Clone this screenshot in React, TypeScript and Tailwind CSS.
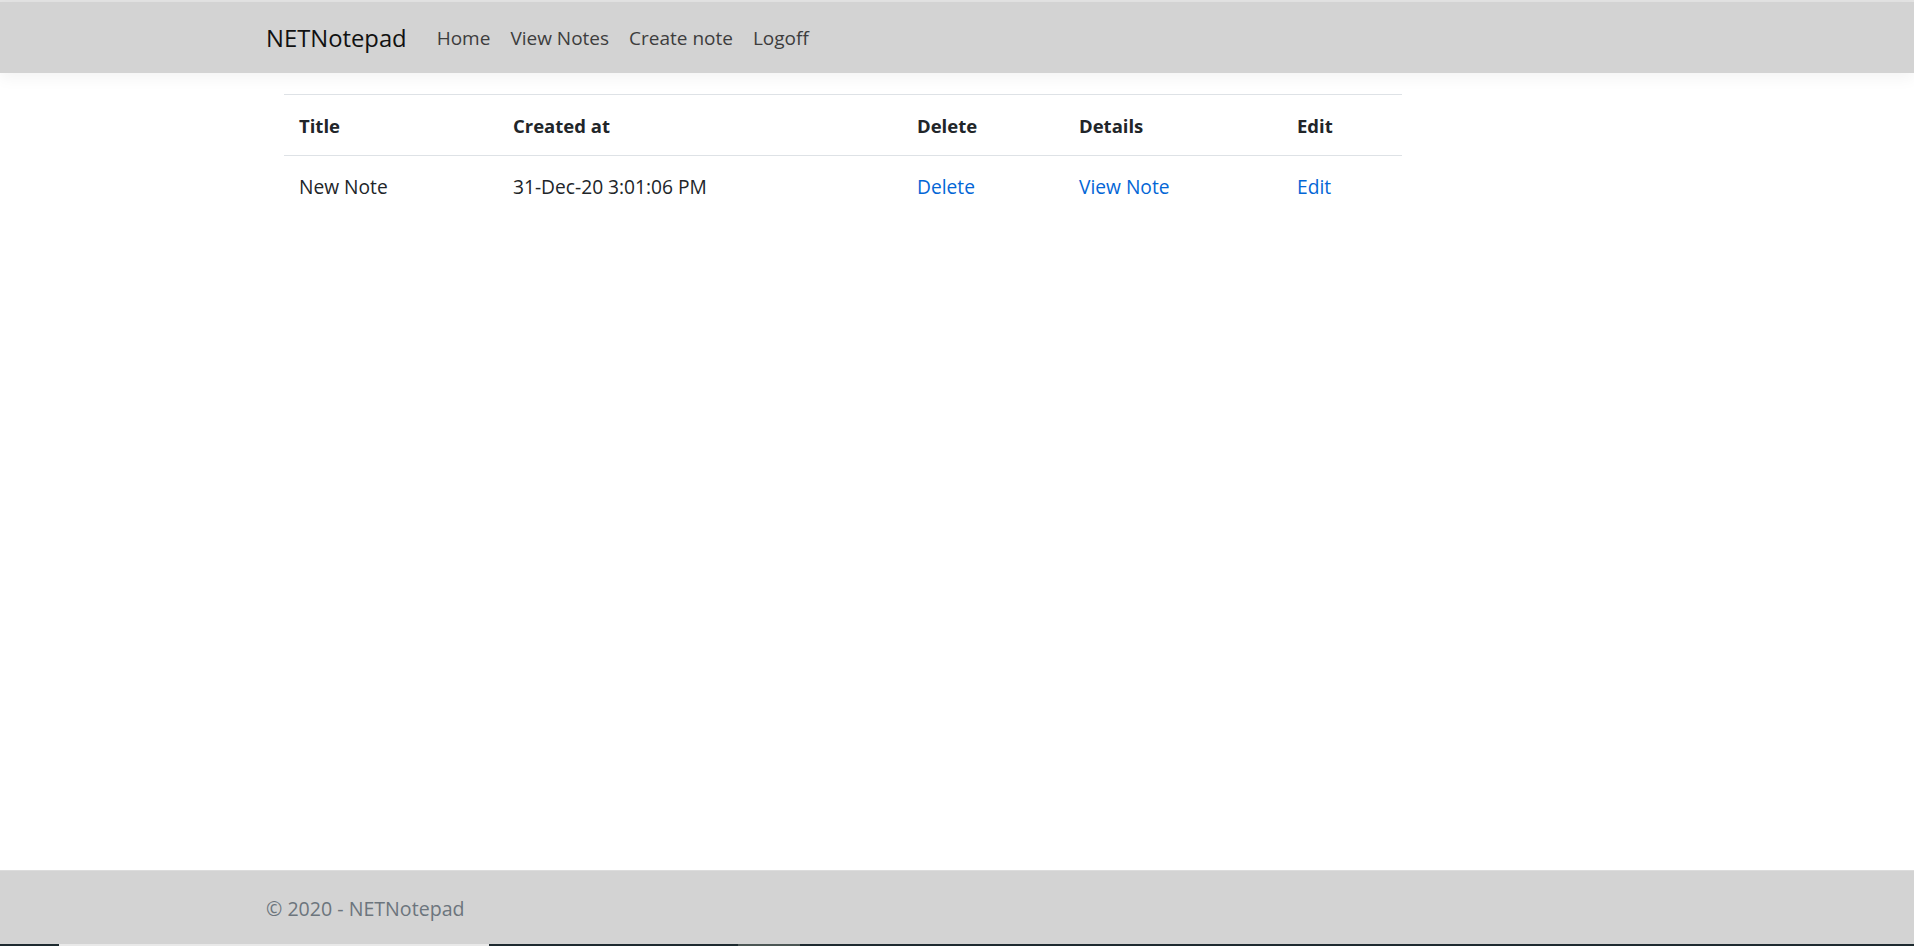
import React from 'react';

type Note = {
  id: number;
  title: string;
  createdAt: string;
};

const notes: Note[] = [{ id: 1, title: 'New Note', createdAt: '31-Dec-20 3:01:06 PM' }];

const navLinks = ['Home', 'View Notes', 'Create note', 'Logoff'];

const App = () => {
  return (
    <div className="flex h-[946px] flex-col overflow-hidden bg-white font-['Open_Sans',sans-serif] text-[#212529]">
      <div className="h-[2px] bg-[#e3e3e3]" />
      <nav className="flex h-[71px] items-center bg-[#d3d3d3] pl-[266px] pt-[2px] shadow-[0_5px_15px_rgba(0,0,0,0.05)]">
        <a className="mr-[20px] text-[23.8px] text-[#111]">NETNotepad</a>
        <div className="flex">
          {navLinks.map((l) => (
            <a key={l} className="px-[10px] text-[19px] text-[#3d3d3d]">
              {l}
            </a>
          ))}
        </div>
      </nav>

      <main className="flex-grow pt-[21px] pl-[284px]">
        <Notes notes={notes} />
      </main>

      <footer className="h-[74px] border-t border-[#dcdcdc] bg-[#d3d3d3] pl-[266px] pt-[2px] text-[19.6px] leading-[72px] text-[#6c757d]">
        © 2020 - NETNotepad
      </footer>
      <div className="flex h-[2px]">
        <div className="w-[59px] bg-[#1d2a2f]" />
        <div className="w-[430px] bg-[#e9e9e9]" />
        <div className="w-[249px] bg-[#1d2a2f]" />
        <div className="w-[62px] bg-[#4b5654]" />
        <div className="flex-grow bg-[#1d2a2f]" />
      </div>
    </div>
  );
};

const Notes = ({ notes }: { notes: Note[] }) => {
  return (
    <table className="w-[1118px] border-collapse text-left text-[19.2px]">
      <thead>
        <tr className="border-t border-b border-[#dee2e6] text-[18.5px]">
          <th className="w-[214px] px-[15px] pt-[16px] pb-[14px] font-bold leading-[30px]">Title</th>
          <th className="w-[404px] px-[15px] pt-[16px] pb-[14px] font-bold leading-[30px]">Created at</th>
          <th className="w-[162px] px-[15px] pt-[16px] pb-[14px] font-bold leading-[30px]">Delete</th>
          <th className="w-[218px] px-[15px] pt-[16px] pb-[14px] font-bold leading-[30px]">Details</th>
          <th className="px-[15px] pt-[16px] pb-[14px] font-bold leading-[30px]">Edit</th>
        </tr>
      </thead>
      <tbody>
        {notes.map((n) => (
          <tr key={n.id}>
            <td className="px-[15px] pt-[16px] pb-[14px] leading-[30px]">{n.title}</td>
            <td className="px-[15px] pt-[16px] pb-[14px] leading-[30px]">{n.createdAt}</td>
            <td className="px-[15px] pt-[16px] pb-[14px] leading-[30px]">
              <a className="text-[#0366d6]">Delete</a>
            </td>
            <td className="px-[15px] pt-[16px] pb-[14px] leading-[30px]">
              <a className="text-[#0366d6]">View Note</a>
            </td>
            <td className="px-[15px] pt-[16px] pb-[14px] leading-[30px]">
              <a className="text-[#0366d6]">Edit</a>
            </td>
          </tr>
        ))}
      </tbody>
    </table>
  );
};

export default App;
